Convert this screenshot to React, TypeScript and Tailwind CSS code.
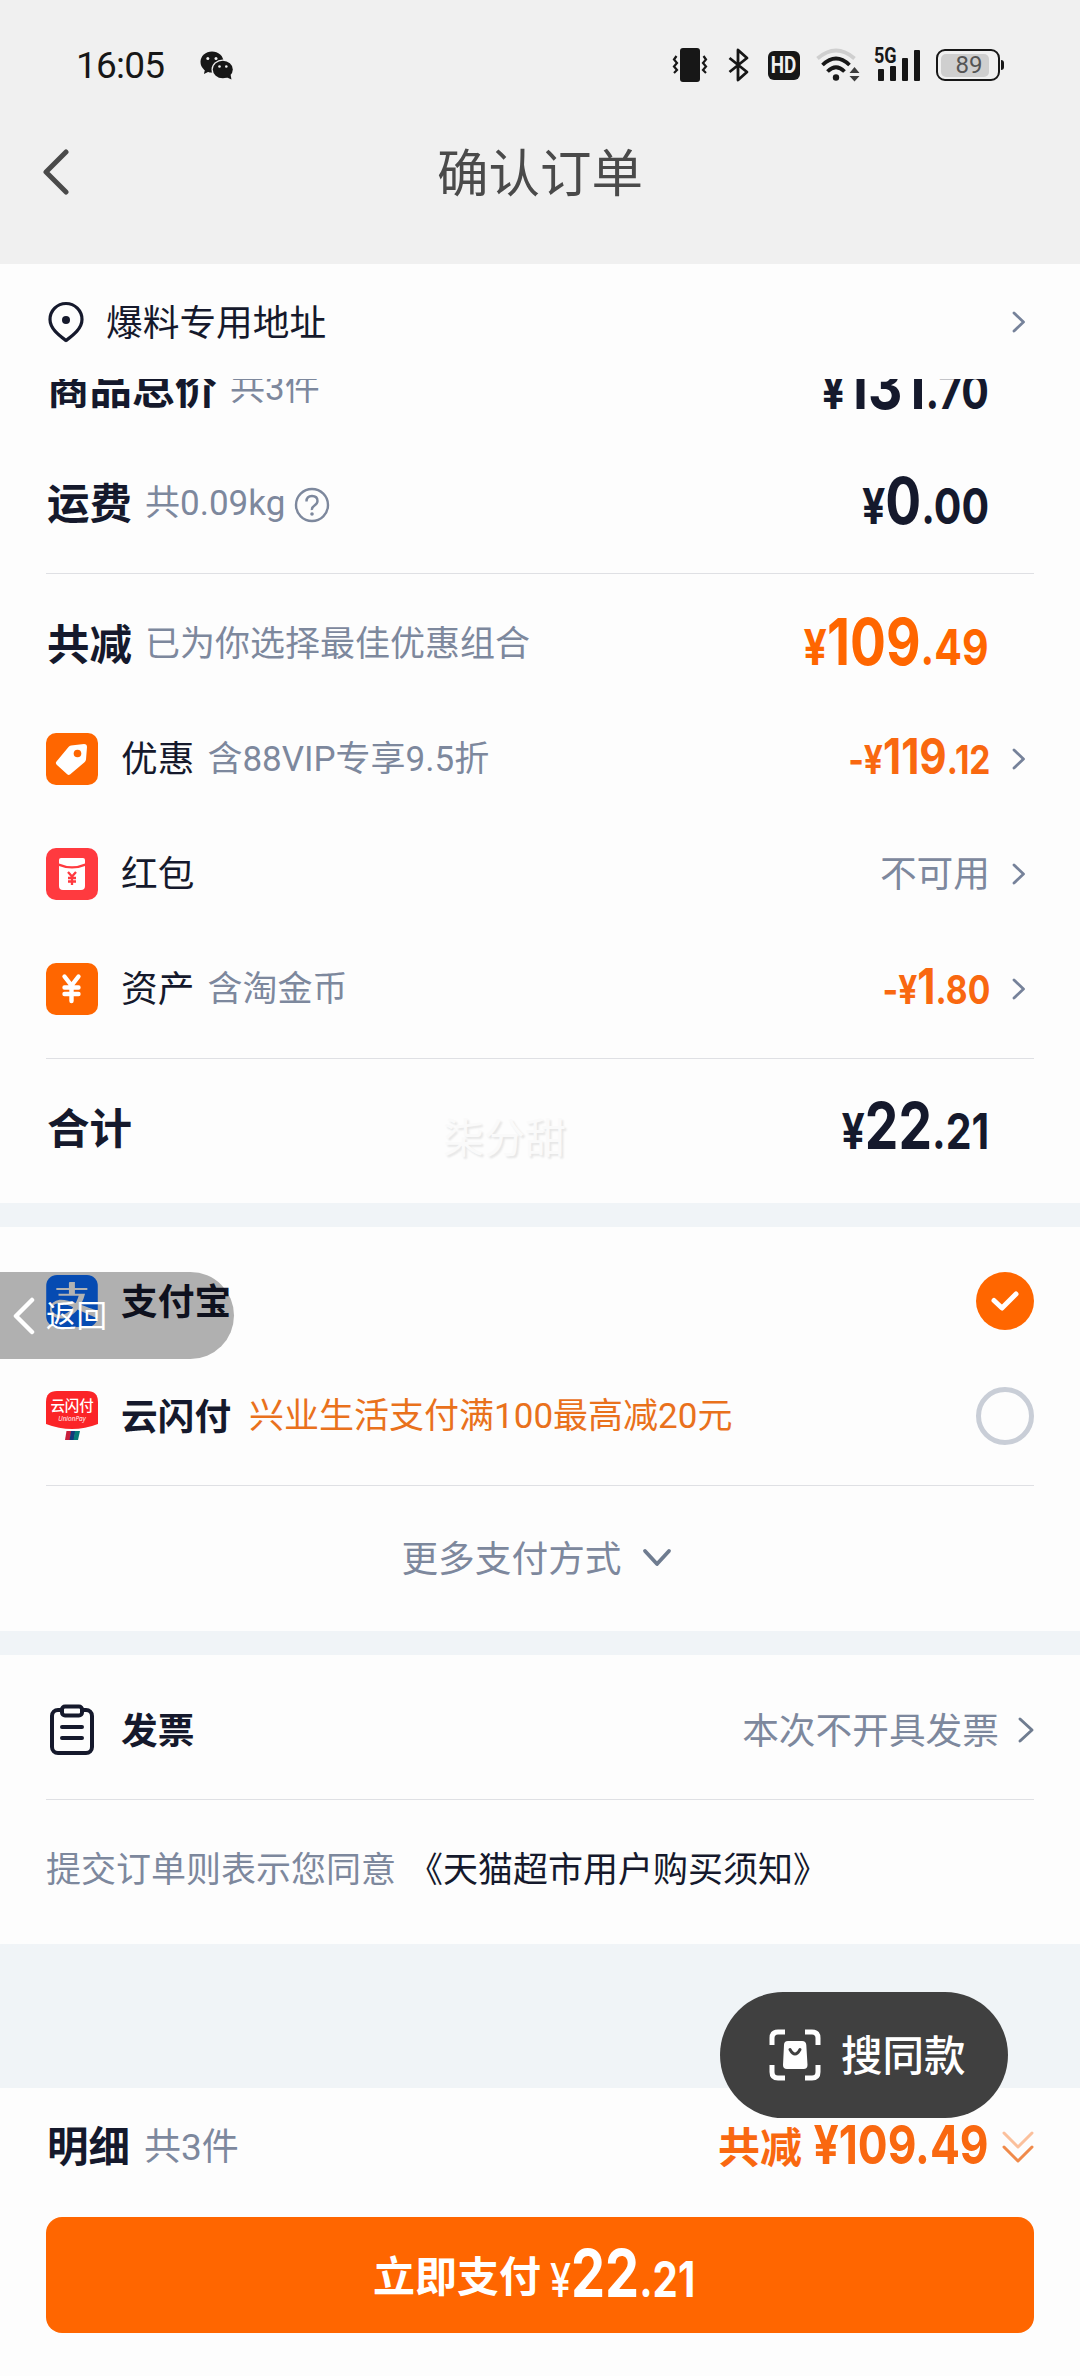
import type { ReactNode } from 'react';
import clsx from 'clsx';
import { SiAlipay } from 'react-icons/si';

const BENEFITS = [
    { key: 'coupon', label: '优惠', note: '含88VIP专享9.5折', int: '119', dec: '12' },
    { key: 'packet', label: '红包', note: '', int: '', dec: '' },
    { key: 'asset', label: '资产', note: '含淘金币', int: '1', dec: '80' },
];

function Chevron({ className }: { className?: string }) {
    return (
        <svg viewBox="0 0 14 24" fill="none" stroke="#76829a" strokeWidth="2.8" strokeLinecap="round" strokeLinejoin="round" className={clsx('h-6 w-[14px] shrink-0', className)}>
            <path d="M2 3l9.5 9L2 21" />
        </svg>
    );
}

function Divider() {
    return <div className="mx-[46px] h-px bg-[#dfe0e4]" />;
}

/* Amount with a smaller currency sign and decimals */
function Price({ int, dec, size = 'lg', minus, className }: { int: string; dec: string; size?: 'lg' | 'sm'; minus?: boolean; className?: string }) {
    const small = size === 'lg' ? 'text-[50px]' : 'text-[39px]';
    return (
        <span className={clsx('mb-1 inline-flex origin-right items-baseline font-[Inter] leading-none font-bold', size === 'lg' ? 'scale-x-[0.82]' : 'scale-x-[0.86]', className)}>
            {minus && <span className={small}>-</span>}
            <span className={small}>¥</span>
            <span className={size === 'lg' ? 'text-[65px]' : 'text-[49px]'}>{int}</span>
            <span className={small}>.{dec}</span>
        </span>
    );
}

function BenefitIcon({ name }: { name: string }) {
    return (
        <svg viewBox="0 0 52 52" className="size-[52px] shrink-0">
            <rect width="52" height="52" rx="10" fill={name === 'packet' ? '#ff3a3f' : '#ff6600'} />
            {name === 'coupon' && (
                <>
                    <path d="M25 12.5l13-1.5q3 0 3 3l-1 12.500q-.2 1.600-1.500 2.800L24 41.500q-1.500 1-2.800-.2l-10.500-9.500q-1.600-1.600-.2-3.200l12-14.500q1-1.300 2.500-1.600z" fill="#fff" />
                    <circle cx="31.500" cy="20.500" r="3.800" fill="#ff6600" />
                </>
            )}
            {name === 'packet' && (
                <>
                    <path d="M13 12q0-2 2-2h22q2 0 2 2v3.500q-13 5.500-26 0z" fill="#fff" />
                    <path d="M13 18q13 5 26 0v20q0 4-4 4H17q-4 0-4-4z" fill="#fff" />
                    <path d="M22 24l4 4.500 4-4.500M26 28.500V37M22 30h8M22 33.500h8" stroke="#ff3a3f" strokeWidth="2.300" fill="none" />
                </>
            )}
            {name === 'asset' && (
                <path d="M18.500 13.500l7 9 7-9M25.500 22v16M18.500 24.500h14M18.500 31h14" stroke="#fff" strokeWidth="4.400" strokeLinecap="round" strokeLinejoin="round" fill="none" />
            )}
        </svg>
    );
}

function SummaryRow({ title, note, children, className }: { title: string; note?: ReactNode; children: ReactNode; className?: string }) {
    return (
        <div className={clsx('flex h-[115px] items-center justify-between pr-[91px] pl-[47px]', className)}>
            <div className="flex items-center pt-1">
                <span className="text-[42.500px] font-bold">{title}</span>
                {note && <span className="ml-[13px] flex items-center text-[35px] text-[#7d889d]">{note}</span>}
            </div>
            {children}
        </div>
    );
}

function StatusBar() {
    return (
        <div className="flex h-[130px] items-center justify-between pr-[76px] pl-[76px] text-[#171717]">
            <div className="flex items-center gap-[36px]">
                <span className="font-[Roboto] text-[37px] leading-none tracking-[-0.8px]">16:05</span>
                <svg viewBox="0 0 34 30" className="h-[30px] w-[34px]">
                    <ellipse cx="12" cy="12" rx="11.500" ry="10.500" fill="#171717" />
                    <path d="M5 19l-1 5 6-3z" fill="#171717" />
                    <ellipse cx="22.800" cy="19.500" rx="11.300" ry="10" fill="#f0f0f0" />
                    <ellipse cx="22.800" cy="19.500" rx="10" ry="8.800" fill="#171717" />
                    <path d="M26 27l5.500 2.500-1-5z" fill="#171717" />
                    <g fill="#f0f0f0">
                        <circle cx="7.800" cy="8.500" r="1.500" />
                        <circle cx="16" cy="8.500" r="1.500" />
                        <circle cx="19.500" cy="16.500" r="1.300" />
                        <circle cx="26.300" cy="16.500" r="1.300" />
                    </g>
                </svg>
            </div>
            <div className="flex items-center">
                <svg viewBox="0 0 36 34" className="h-[34px] w-9">
                    <rect x="8" y="0" width="20" height="34" rx="3" fill="#171717" />
                    <path d="M4.500 8L2 11.500l3 3.500-3 3.500 3 3.500L2 25M31.500 8l2.500 3.500-3 3.500 3 3.500-3 3.500 3 3" stroke="#171717" strokeWidth="2.200" fill="none" />
                </svg>
                <svg viewBox="0 0 22 34" className="ml-5 h-[34px] w-[22px]">
                    <path d="M1.500 10l17.500 14-9 8V2l9 8L1.500 24" stroke="#171717" strokeWidth="2.800" fill="none" strokeLinejoin="round" />
                </svg>
                <span className="ml-[18px] flex h-[29px] w-8 items-center justify-center rounded-md bg-[#171717]">
                    <span className="scale-x-[0.82] font-[Roboto] text-[23px] leading-none font-bold text-[#f0f0f0]">HD</span>
                </span>
                <svg viewBox="0 0 45 34" className="ml-4 h-[34px] w-[45px]">
                    <g fill="none" strokeWidth="3.800">
                        <path d="M1.500 10.500q18.500-16 37 0" stroke="#cfcfcf" />
                        <path d="M6.500 17q13.500-13 27 0" stroke="#171717" />
                        <path d="M11.500 23.500q8.500-8.500 17 0" stroke="#171717" />
                    </g>
                    <circle cx="20" cy="29.500" r="3.200" fill="#171717" />
                    <path d="M33.500 25l5-6 5 6zM33.500 28h10l-5 5.500z" fill="#3d3d3d" />
                </svg>
                <span className="relative ml-[13px] flex h-[34px] w-[47px] items-end gap-[6px] pb-px pl-1">
                    <span className="absolute -top-[2px] left-0 origin-left scale-x-[0.82] font-[Roboto] text-[22px] leading-[20px] font-bold">5G</span>
                    <span className="h-3 w-[6px] rounded-[1px] bg-[#171717]" />
                    <span className="h-[15px] w-[6px] rounded-[1px] bg-[#171717]" />
                    <span className="h-[23px] w-[6px] rounded-[1px] bg-[#171717]" />
                    <span className="h-[31px] w-[6px] rounded-[1px] bg-[#171717]" />
                </span>
                <span className="ml-[15px] flex h-8 w-16 items-center rounded-[9px] border-[2.5px] border-[#171717] p-[2.500px]">
                    <span className="flex h-full w-[48px] items-center justify-end rounded-[5px] bg-[#cfcfcf] pr-[6px]">
                        <span className="font-[Roboto] text-[24px] leading-none text-[#555]">89</span>
                    </span>
                </span>
                <span className="ml-px h-[10px] w-[3px] rounded-r bg-[#171717]" />
            </div>
        </div>
    );
}

function UnionPayIcon() {
    return (
        <span className="relative block size-[52px] shrink-0">
            <svg viewBox="0 0 52 52" className="size-full">
                <path d="M0 12Q0 1 11 1h30q11 0 11 11v22q-26 10-52 0z" fill="#fb2427" />
                <path d="M20.500 41h5l-1.500 9h-5z" fill="#c81f3c" />
                <path d="M25 41h4.500l-1.500 9h-4.500z" fill="#123a7c" />
                <path d="M29 41h5l-2 9h-4.500z" fill="#067a78" />
            </svg>
            <span className="absolute top-[9px] left-0 w-full text-center text-[14.500px] leading-[16px] font-medium tracking-[-0.2px] text-white">云闪付</span>
            <span className="absolute top-[24px] left-0 w-full text-center font-['Open_Sans'] text-[6.500px] leading-[9px] text-white italic">UnionPay</span>
        </span>
    );
}

export default function App() {
    return (
        <div className="relative h-[2376px] w-[1080px] overflow-hidden bg-[#f0f4f7] font-[Roboto,'Noto_Sans_CJK_SC',sans-serif] text-[#15192c]">
            {/* Header */}
            <header className="h-[264px] bg-[#f0f0f0]">
                <StatusBar />
                <div className="grid h-[84px] grid-cols-[80px_1fr_80px] items-center">
                    <svg viewBox="0 0 28 46" className="ml-[42px] h-[46px] w-7">
                        <path d="M24 3L4 23l20 20" stroke="#4a4a4a" strokeWidth="5" strokeLinecap="round" strokeLinejoin="round" fill="none" />
                    </svg>
                    <h1 className="pt-[6px] text-center text-[51.500px] leading-none text-[#4a4a4a]">确认订单</h1>
                </div>
            </header>

            {/* Sticky address bar */}
            <div className="flex h-[115px] items-center bg-[#fdfdfd] pr-[54px] pl-[47px]">
                <svg viewBox="0 0 38 42" className="h-[42px] w-[38px]">
                    <path d="M19 39.500C13 35 3 28 3 18.500a16 16 0 0 1 32 0C35 28 25 35 19 39.500z" stroke="#15192c" strokeWidth="3.200" fill="none" strokeLinejoin="round" />
                    <circle cx="19" cy="19" r="4" fill="#15192c" />
                </svg>
                <span className="ml-[21px] flex-1 pt-1 text-[36.700px]">爆料专用地址</span>
                <Chevron />
            </div>

            {/* Price summary */}
            <section className="relative h-[824px] overflow-hidden bg-[#fdfdfd]">
                <SummaryRow title="商品总价" note="共3件" className="-mt-[49px]">
                    <Price int="131" dec="70" />
                </SummaryRow>
                <SummaryRow
                    title="运费"
                    className="mb-[13px]"
                    note={
                        <>
                            共0.09kg
                            <svg viewBox="0 0 36 36" className="ml-[9px] size-9">
                                <circle cx="18" cy="18" r="16" stroke="#7d889d" strokeWidth="2.400" fill="none" />
                                <path d="M12.500 14.500q0-5.500 5.500-5.500t5.500 5q0 2.500-3 4.500t-2.500 4.500" stroke="#7d889d" strokeWidth="2.400" fill="none" />
                                <circle cx="18" cy="27" r="1.800" fill="#7d889d" />
                            </svg>
                        </>
                    }
                >
                    <Price int="0" dec="00" />
                </SummaryRow>
                <Divider />
                <SummaryRow title="共减" note="已为你选择最佳优惠组合" className="mt-3">
                    <Price int="109" dec="49" className="text-[#ff6600]" />
                </SummaryRow>
                {BENEFITS.map((item) => (
                    <div key={item.key} className="flex h-[115px] items-center pr-[54px] pl-[46px]">
                        <BenefitIcon name={item.key} />
                        <span className="ml-[23px] pt-[3px] text-[36.700px]">{item.label}</span>
                        <span className="ml-[13px] flex-1 pt-[3px] text-[35px] text-[#7d889d]">{item.note}</span>
                        {item.int ? (
                            <Price int={item.int} dec={item.dec} size="sm" minus className="text-[#f96810]" />
                        ) : (
                            <span className="pt-[3px] text-[36.700px] text-[#7d889d]">不可用</span>
                        )}
                        <Chevron className="ml-[22px]" />
                    </div>
                ))}
                <div className="h-3" />
                <Divider />
                <SummaryRow title="合计" className="mt-[11px]">
                    <Price int="22" dec="21" />
                </SummaryRow>
                <span className="absolute top-[737px] left-[443px] text-[41px] leading-[46px] text-[#fafafa] [text-shadow:2px_2px_2px_#e6e6e6]">柒分甜</span>
            </section>

            {/* Payment methods */}
            <section className="mt-6 h-[404px] bg-[#fdfdfd] pt-4">
                <div className="flex h-[115px] items-center pr-[46px] pl-[46px]">
                    <span className="size-[52px] overflow-hidden rounded-[11px] bg-white">
                        <SiAlipay className="size-full text-[#0a6cff]" />
                    </span>
                    <span className="ml-[23px] flex-1 pt-1 text-[36.700px] font-bold">支付宝</span>
                    <span className="flex size-[58px] items-center justify-center rounded-full bg-[#ff6600]">
                        <svg viewBox="0 0 28 20" className="h-5 w-7">
                            <path d="M3 9.500l8 7.500L25 3" stroke="#fff" strokeWidth="5" strokeLinecap="round" strokeLinejoin="round" fill="none" />
                        </svg>
                    </span>
                </div>
                <div className="flex h-[115px] items-center pr-[46px] pl-[46px]">
                    <UnionPayIcon />
                    <span className="ml-[23px] pt-1 text-[36.700px] font-bold">云闪付</span>
                    <span className="ml-[18px] flex-1 pt-1 text-[35px] text-[#e9711c]">兴业生活支付满100最高减20元</span>
                    <span className="size-[58px] rounded-full border-[5.500px] border-[#c9ced7]" />
                </div>
                <div className="h-3" />
                <Divider />
                <div className="flex h-[144px] items-center justify-center pr-[7px] text-[36.700px] text-[#7d889d]">
                    <span className="pt-1">更多支付方式</span>
                    <svg viewBox="0 0 30 20" className="ml-5 h-5 w-[30px]">
                        <path d="M3 3l12 13L27 3" stroke="#6f7c90" strokeWidth="3.800" strokeLinecap="round" strokeLinejoin="round" fill="none" />
                    </svg>
                </div>
            </section>

            {/* Invoice */}
            <section className="mt-6 h-[289px] bg-[#fdfdfd]">
                <div className="flex h-[144px] items-center pt-[5px] pr-[45px] pl-12">
                    <svg viewBox="0 0 48 52" className="h-[52px] w-12" fill="none" stroke="#15192c" strokeWidth="4">
                        <rect x="4" y="6" width="40" height="43" rx="6" />
                        <rect x="14" y="2.500" width="20" height="9" rx="3" fill="#fdfdfd" />
                        <path d="M14 23h20M14 34h20" strokeLinecap="round" />
                    </svg>
                    <span className="ml-[25px] flex-1 pt-[5px] text-[36.700px] font-bold">发票</span>
                    <span className="pt-[5px] text-[36.700px] text-[#7d889d]">本次不开具发票</span>
                    <svg viewBox="0 0 18 28" className="ml-[18px] h-7 w-[18px]">
                        <path d="M3 3l12 11L3 25" stroke="#6f7c90" strokeWidth="3" strokeLinecap="round" strokeLinejoin="round" fill="none" />
                    </svg>
                </div>
                <Divider />
                <div className="flex h-[142px] items-center pl-[46px] text-[35px]">
                    <span className="text-[#7d889d]">提交订单则表示您同意</span>
                    <span className="ml-[12px]">《天猫超市用户购买须知》</span>
                </div>
            </section>

            {/* Pay footer */}
            <footer className="mt-36 h-72 bg-[#fdfdfd]">
                <div className="flex h-[118px] items-center pr-[46px] pl-[47px]">
                    <span className="pt-[3px] text-[41.500px] font-bold">明细</span>
                    <span className="ml-[14px] flex-1 pt-[2px] text-[37px] text-[#7d889d]">共3件</span>
                    <span className="pt-[3px] text-[42px] font-bold text-[#f96810]">共减</span>
                    <span className="mb-1 flex w-[187px] justify-end">
                        <span className="origin-right scale-x-[0.82] font-[Inter] text-[54px] leading-none font-bold text-[#f96810]">¥109.49</span>
                    </span>
                    <svg viewBox="0 0 32 34" className="ml-[13px] h-[34px] w-8" fill="none" strokeWidth="3" strokeLinecap="round" strokeLinejoin="round">
                        <path d="M2 3l14 14L30 3" stroke="#fbc09c" />
                        <path d="M2 17l14 14 14-14" stroke="#f08a4a" />
                    </svg>
                </div>
                <button className="mx-[46px] mt-[11px] flex h-[116px] w-[988px] items-center rounded-2xl bg-[#ff6600] pl-[327px] text-white">
                    <span className="pt-[5px] text-[42px] font-bold">立即支付</span>
                    <span className="mb-[5px] ml-[9px] inline-flex origin-left scale-x-[0.82] items-baseline font-[Inter] leading-none font-bold">
                        <span className="text-[46px] font-medium">¥</span>
                        <span className="text-[66px]">22</span>
                        <span className="text-[49px]">.21</span>
                    </span>
                </button>
            </footer>

            {/* Floating controls */}
            <div className="absolute top-[1272px] left-0 flex h-[87px] w-[234px] items-center rounded-r-full bg-black/30 pl-3 text-white">
                <svg viewBox="0 0 24 38" className="h-[38px] w-6">
                    <path d="M20 3L4 19l16 16" stroke="#fff" strokeWidth="4.500" strokeLinecap="round" strokeLinejoin="round" fill="none" />
                </svg>
                <span className="ml-[10px] pt-[3px] text-[30.500px]">返回</span>
            </div>
            <div className="absolute top-[1992px] left-[720px] flex h-[126px] w-[288px] items-center rounded-full bg-[#404040] pl-[49px] text-white">
                <svg viewBox="0 0 52 52" className="size-[52px]" fill="none">
                    <path d="M3 16V9q0-6 6-6h7M36 3h7q6 0 6 6v7M49 36v7q0 6-6 6h-7M16 49H9q-6 0-6-6v-7" stroke="#fff" strokeWidth="5" />
                    <path d="M19 12h14q4 0 4.300 4L38.500 36q0 4-4 4H18q-4 0-4-4l1-20q0-4 4-4z" fill="#fff" />
                    <path d="M21 20.500q5 9 10 0" stroke="#404040" strokeWidth="3" strokeLinecap="round" />
                </svg>
                <span className="ml-5 pt-1 text-[41.500px] font-medium">搜同款</span>
            </div>
        </div>
    );
}
